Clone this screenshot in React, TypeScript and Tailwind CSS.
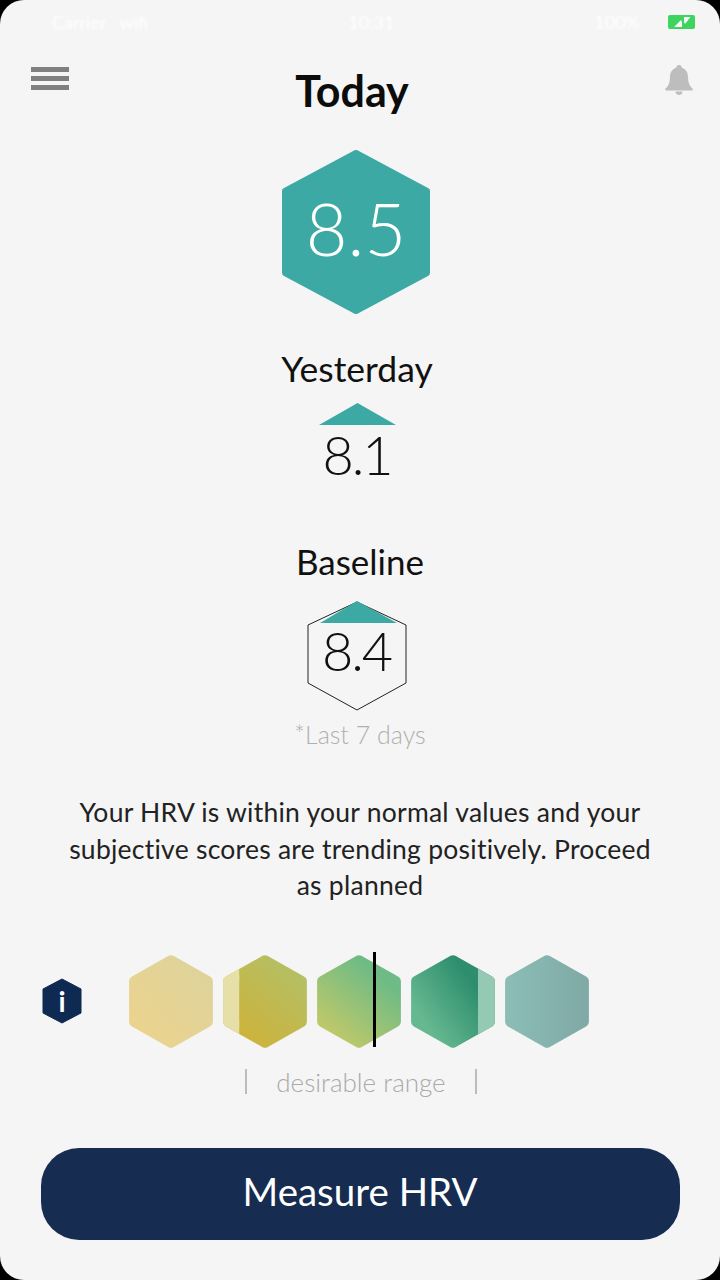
const hexPoints = "50,1 99,26 99,74 50,99 1,74 1,26";

const ScaleHex = ({
  id,
  from,
  to,
  x1,
  y1,
  x2,
  y2,
  overlayX,
  overlayW,
  overlayColor,
}: {
  id: string;
  from: string;
  to: string;
  x1: string;
  y1: string;
  x2: string;
  y2: string;
  overlayX?: number;
  overlayW?: number;
  overlayColor?: string;
}) => (
  <svg viewBox="0 0 100 100" preserveAspectRatio="none" className="h-[95px] w-[86px] shrink-0">
    <defs>
      <linearGradient id={id} x1={x1} y1={y1} x2={x2} y2={y2}>
        <stop offset="0" stopColor={from} />
        <stop offset="1" stopColor={to} />
      </linearGradient>
      <clipPath id={`${id}-clip`}>
        <rect x={overlayX ?? 0} y="0" width={overlayW ?? 0} height="100" />
      </clipPath>
    </defs>
    <polygon points={hexPoints} fill={`url(#${id})`} stroke={`url(#${id})`} strokeWidth="14" strokeLinejoin="round" transform="translate(6.5 6.5) scale(0.87)" />
    {overlayColor && (
      <g clipPath={`url(#${id}-clip)`}>
        <polygon points={hexPoints} fill={overlayColor} stroke={overlayColor} strokeWidth="14" strokeLinejoin="round" transform="translate(6.5 6.5) scale(0.87)" />
      </g>
    )}
  </svg>
);

export default function App() {
  return (
    <div className="h-[1280px] w-[720px] overflow-hidden bg-black font-['Lato',sans-serif]">
      <div className="flex h-full flex-col items-center rounded-[24px] bg-[#f5f5f5]">
        <div className="flex h-[38px] w-full items-start justify-between pl-[52px] pr-[25px] pt-[12px] text-[18px] leading-[20px] text-white">
          <span className="blur-[1px]">Carrier &nbsp; wifi</span>
          <span className="blur-[1px]">10:31</span>
          <div className="flex items-center gap-[28px]">
            <span className="blur-[1px]">100%</span>
            <svg width="27" height="14" viewBox="0 0 27 14">
              <rect width="27" height="14" rx="2" fill="#3fd460" />
              <polygon points="6,12 13,5 14,7 14,12" fill="#f5f5f5" />
              <polygon points="16,2 22.500,2 17,9 16,7" fill="#f5f5f5" />
            </svg>
          </div>
        </div>

        <div className="flex h-[80px] w-full items-start justify-between pl-[31px] pr-[27px]">
          <div className="mt-[29px] flex w-[38px] flex-col gap-[4px]">
            <div className="h-[5px] bg-[#808080]" />
            <div className="h-[5px] bg-[#808080]" />
            <div className="h-[5px] bg-[#808080]" />
          </div>
          <h1 className="mt-[28px] pr-[30px] text-[43px] font-bold leading-[50px] text-[#0c0c0c]">Today</h1>
          <svg width="28" height="30" viewBox="0 0 28 30" className="mt-[27px]">
            <path d="M14 0c1.700 0 2.800 1.200 2.800 2.700 4.200 1.300 6.200 5 6.200 9.300 0 5.500 1.600 9 4.400 11.500.6.600.6 1.900-.7 1.900H1.300c-1.300 0-1.300-1.300-.7-1.900C3.400 21 5 17.500 5 12c0-4.300 2-8 6.200-9.300C11.200 1.200 12.300 0 14 0Z" fill="#bdbdbd" />
            <path d="M10.500 26.500h7c0 2-1.500 3.500-3.500 3.500s-3.500-1.500-3.500-3.500Z" fill="#bdbdbd" />
          </svg>
        </div>

        <div className="relative mt-[32px] ml-[-8px] flex h-[164px] w-[148px] items-center justify-center">
          <svg viewBox="0 0 148 164" className="absolute inset-0">
            <polygon points="74,3 145,41 145,123 74,161 3,123 3,41" fill="#3ca9a4" stroke="#3ca9a4" strokeWidth="6" strokeLinejoin="round" />
          </svg>
          <span className="relative mt-[-8px] text-[72px] font-light leading-none text-white">8.5</span>
        </div>

        <p className="mt-[34px] ml-[-6px] text-[35.500px] leading-[42px] text-[#111]">Yesterday</p>
        <svg width="77" height="22" viewBox="0 0 77 22" className="mt-[13px] ml-[-5px]">
          <polygon points="38.500,0 77,22 0,22" fill="#3ca9a4" />
        </svg>
        <span className="ml-[-6px] text-[54px] font-light leading-[60px] tracking-[-2px] text-[#111]">8.1</span>

        <p className="mt-[55px] text-[35px] leading-[42px] text-[#111]">Baseline</p>
        <div className="relative mt-[19px] ml-[-7px] flex h-[110px] w-[100px] items-center justify-center">
          <svg viewBox="0 0 100 110" className="absolute inset-0">
            <polygon points="50,1 99,24 99,82 50,109 1,82 1,24" fill="none" stroke="#222" strokeWidth="1" strokeLinejoin="round" />
            <polygon points="50,0 90,22 13,22" fill="#3ca9a4" />
          </svg>
          <span className="relative mt-[-10px] text-[54px] font-light leading-none tracking-[-2px] text-[#111]">8.4</span>
        </div>
        <p className="mt-[7px] text-[25px] font-light leading-[32px] text-[#b0b0b0]">*Last 7 days</p>

        <p className="mt-[44px] w-[600px] text-center text-[26.500px] leading-[36.500px] tracking-[0.25px] text-[#222]">
          Your HRV is within your normal values and your subjective scores are trending positively. Proceed as planned
        </p>

        <div className="mt-[50px] flex h-[95px] w-full items-center pl-[42px]">
          <div className="relative mr-[46px] flex h-[46px] w-[40px] shrink-0 items-center justify-center">
            <svg viewBox="0 0 40 46" className="absolute inset-0">
              <polygon points="20,1 39,11 39,35 20,45 1,35 1,11" fill="#0f2a52" stroke="#0f2a52" strokeLinejoin="round" />
            </svg>
            <span className="relative text-[28px] font-bold leading-none text-white">i</span>
          </div>
          <div className="flex gap-[8px]">
            <ScaleHex id="h1" from="#ebd38f" to="#dfd39a" x1="0.150" y1="0.900" x2="0.900" y2="0.150" />
            <ScaleHex id="h2" from="#cdb33c" to="#b3c066" x1="0.300" y1="1" x2="1" y2="0.100" overlayX={0} overlayW={20} overlayColor="#e6e0a8" />
            <div className="relative">
              <ScaleHex id="h3" from="#c1c968" to="#6fbb85" x1="0.200" y1="1" x2="0.800" y2="0.200" />
              <div className="absolute left-[57px] top-[-2px] h-[95px] w-[3px] bg-black" />
            </div>
            <ScaleHex id="h4" from="#65b88f" to="#2d8d6d" x1="0.150" y1="0.800" x2="0.800" y2="0.300" overlayX={79} overlayW={21} overlayColor="#94c9b4" />
            <ScaleHex id="h5" from="#8bbcb6" to="#80aaa6" x1="0" y1="0.500" x2="1" y2="0.500" />
          </div>
        </div>

        <div className="mt-[20px] ml-[2px] flex h-[26px] items-center text-[26px] font-light leading-[26px] text-[#aaa]">
          <div className="h-[25px] w-[2px] bg-[#bcbcbc]" />
          <span className="mx-[29px]">desirable range</span>
          <div className="h-[25px] w-[2px] bg-[#bcbcbc]" />
        </div>

        <button className="mt-[53px] flex h-[92px] w-[639px] items-center justify-center rounded-[38px] bg-[#162c50] pb-[4px] text-[38.500px] text-white">
          Measure HRV
        </button>
      </div>
    </div>
  );
}
